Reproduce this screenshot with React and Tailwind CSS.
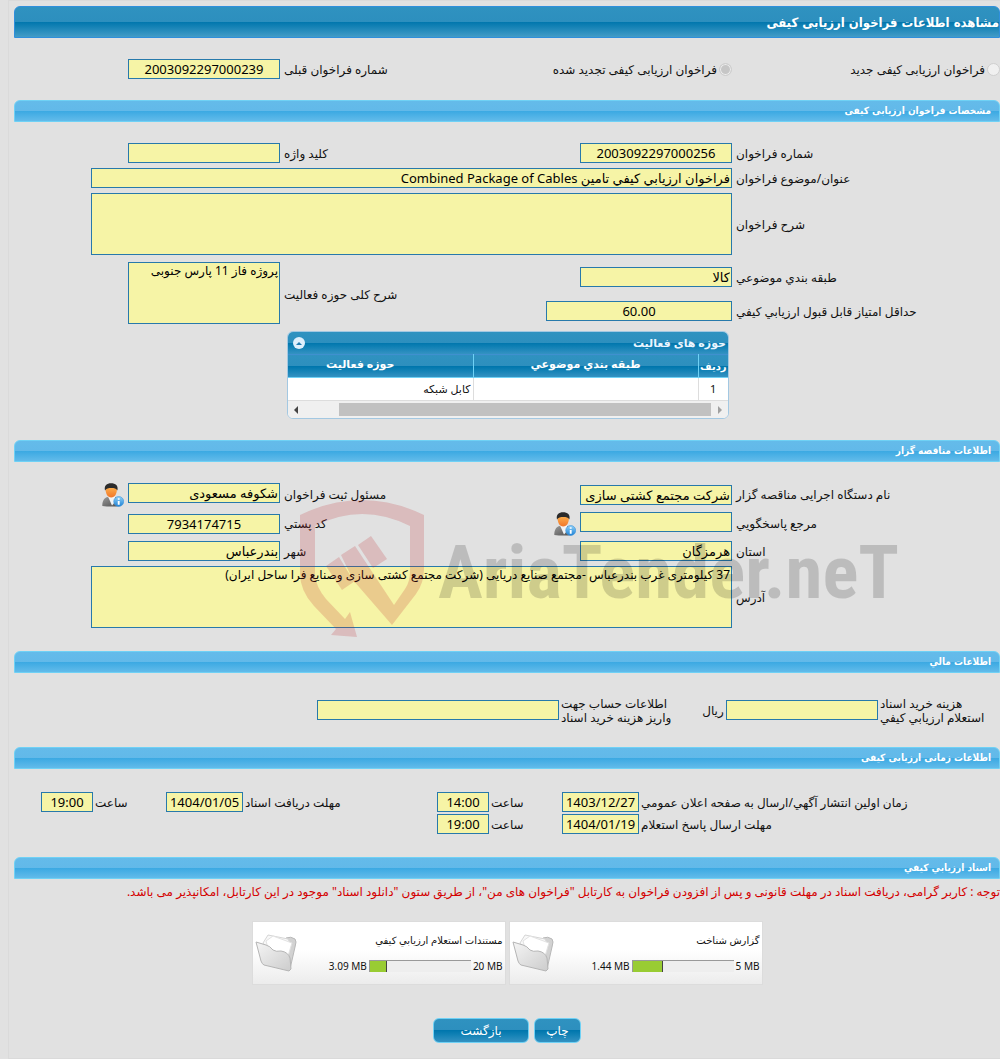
import React from "react";

const fieldBase =
  "block border border-[#2779ab] bg-[#f6f4a6] px-px text-black outline-none";

const grid =
  "grid grid-cols-[264px_minmax(0,1fr)_162px_266px] items-center gap-x-1";

function Field({ id, value = "", center = false, width = "w-[152px]", label, className = "" }) {
  return (
    <input
      id={id}
      readOnly
      aria-label={label}
      defaultValue={value}
      className={`${fieldBase} h-5 max-w-full text-[13px] ${width} ${center ? "text-center" : "text-right"} ${className}`}
    />
  );
}

function Area({ id, value = "", width }) {
  return (
    <textarea
      id={id}
      readOnly
      defaultValue={value}
      className={`${fieldBase} h-[62px] max-w-full resize-none overflow-hidden text-[12px] leading-4 ${width}`}
    />
  );
}

function Label({ htmlFor, children, className = "" }) {
  return (
    <label htmlFor={htmlFor} className={`block pt-0.5 whitespace-nowrap text-left leading-4 ${className}`}>
      {children}
    </label>
  );
}

function SectionBar({ children }) {
  return (
    <h2 className="h-[22px] rounded-t-md border border-[#6fd1f5] bg-[linear-gradient(to_bottom,#64bbea_0%,#62b9e9_48%,#39a8e2_48%,#62bbea_100%)] px-2 font-['DejaVu_Sans_Condensed','DejaVu_Sans',sans-serif] text-[10px] leading-5 font-bold text-white">
      {children}
    </h2>
  );
}

function UserInfoIcon() {
  return (
    <svg width="22" height="24" viewBox="0 0 22 24" aria-hidden="true">
      <defs>
        <linearGradient id="suit" x1="0" y1="0" x2="1" y2="1">
          <stop offset="0" stopColor="#9a9a9a" />
          <stop offset="1" stopColor="#4b4b4b" />
        </linearGradient>
        <linearGradient id="skin" x1="0" y1="0" x2="0" y2="1">
          <stop offset="0" stopColor="#ffb54f" />
          <stop offset="1" stopColor="#f0762a" />
        </linearGradient>
        <linearGradient id="info" x1="0" y1="0" x2="0" y2="1">
          <stop offset="0" stopColor="#8fd0f8" />
          <stop offset="1" stopColor="#1f83d6" />
        </linearGradient>
      </defs>
      <path d="M0.3 23c0-4.500 1.500-8 5-9l4 1 4-1c3.500 1 5 4.500 5 9q-9 1-18 0z" fill="url(#suit)" />
      <path d="M6 13.500L10 22.500l3-3.500 0-5.500z" fill="#f4f4f4" />
      <path d="M3.500 5.500c0 5 2 9 5.700 9s5.800-4 5.800-9c-2-3-9.500-3-11.500 0z" fill="url(#skin)" />
      <path d="M3 7.500C1.800 2.500 5 .2 9 .2c4.500 0 7.500 2.300 6.400 7.300C14.500 5.500 12 5 9.500 5c-3 0-5.300.3-6.500 2.500z" fill="#2b2b2b" />
      <circle cx="16.700" cy="18.500" r="5" fill="url(#info)" stroke="#3f94da" strokeWidth=".6" />
      <path d="M16.700 15.200v1.600M16.700 18v3.800" stroke="#fff" strokeWidth="1.900" />
    </svg>
  );
}

function Watermark() {
  return (
    <div
      dir="ltr"
      aria-hidden="true"
      className="pointer-events-none absolute top-[61px] left-[286px] flex w-[612px] items-center"
    >
      <svg className="shrink-0 overflow-visible" width="126" height="137" viewBox="0 0 126 137">
        <g fill="#c0262c" fillOpacity=".2">
          <path d="M0 14Q62-16 124 14V68Q124 82 116 93L92 124L53 79L41 54L55 45L94 104L105 88Q110 81 110 70V25Q62 1 15 25V74Q16 86 26 98L45 118L50 111L57 136L31 134L36 128L14 105Q0 90 0 72Z" />
          <path d="M26 65L39 56L53 79L55 80L42 89Z" />
          <path d="M58 44L71 35L87 58L73 67Z" />
        </g>
      </svg>
      <span className="mt-1 ml-3 whitespace-nowrap font-['Liberation_Sans_Narrow','Roboto_Condensed','Open_Sans_Condensed','Liberation_Sans',sans-serif] text-[75px] leading-[96px] font-bold text-black/16">
        AriaTender.neT
      </span>
    </div>
  );
}

function Folder() {
  return (
    <svg width="42" height="40" viewBox="0 0 42 40" aria-hidden="true">
      <defs>
        <linearGradient id="folder" x1="0" y1="0" x2="1" y2="1">
          <stop offset="0" stopColor="#f5f5f5" />
          <stop offset="1" stopColor="#cccccc" />
        </linearGradient>
      </defs>
      <path d="M10 12L28 9L31 4Q36 2 40 5Q42 7 40 13L35 35L29 30Z" fill="#d2d2d2" stroke="#b8b8b8" />
      <path d="M8 9L13 1L33 5L36 11L31 31L14 20Z" fill="#f8f8f8" stroke="#d6d6d6" />
      <path d="M11 7L18 2L37 9L33 22L14 18Z" fill="#fff" stroke="#e2e2e2" />
      <path d="M1 8L11 11Q15 12 18 16Q21 18 26 17Q33 18 35 24L36 35L34 37L9 31Q7 30 6 27Z" fill="url(#folder)" stroke="#b5b5b5" />
    </svg>
  );
}

function FileCard({ title, used, total, percent }) {
  return (
    <div className="flex h-16 w-[254px] justify-between border border-[#dcdcdc] bg-linear-to-b from-white from-45% to-[#ececec] px-0.5">
      <div className="flex flex-col pt-2.5">
        <div className="text-[10px] leading-4">{title}</div>
        <div className="mt-2.5 flex h-4 items-center gap-0.5 text-[10px]">
          <bdi>{total}</bdi>
          <div dir="ltr" className="h-3 w-[102px] border-t border-l border-[#999] bg-[#eee]">
            <div className="h-full border-r border-[#444] bg-[#9c3]" style={{ width: percent + "%" }} />
          </div>
          <bdi>{used}</bdi>
        </div>
      </div>
      <div className="pt-3">
        <Folder />
      </div>
    </div>
  );
}

const darkBar =
  "bg-[linear-gradient(to_bottom,#2f92c0_0%,#2d8fbe_50%,#0076ad_50%,#0f80b4_66%,#3492c2_100%)]";
const radio =
  "size-[13px] shrink-0 appearance-none rounded-full border border-[#cfcfcf] bg-[#f0f0f0] checked:bg-[#c6c6c6] checked:shadow-[inset_0_0_0_1px_#ececec]";
const button =
  "h-[25px] rounded-md border border-[#6fd1f5] text-[12px] text-white";

export default function App() {
  return (
    <div
      dir="rtl"
      lang="fa"
      className="min-h-[1059px] overflow-x-hidden bg-[#e1e1e1] pl-2 font-['Noto_Sans','DejaVu_Sans',sans-serif] text-[12px] text-[#111]"
    >
      <main className="border-y border-l border-[#dadada] pt-[5px] pb-[15px] pl-[5px]">
        <h1 className="h-8 rounded-t-md border border-[#2f8fdc] bg-[linear-gradient(to_bottom,#2f92c0_0%,#2d8fbe_50%,#0076ad_50%,#439cc7_100%)] font-['DejaVu_Sans_Condensed','DejaVu_Sans',sans-serif] text-[13px] leading-8 font-bold text-white">
          مشاهده اطلاعات فراخوان ارزیابی کیفی
        </h1>

        <div className={`${grid} mt-[21px] mb-[21px]`}>
          <div className="flex items-center gap-0.5">
            <input id="new" type="radio" name="kind" disabled className={radio} />
            <Label htmlFor="new">فراخوان ارزیابی کیفی جدید</Label>
          </div>
          <div className="flex items-center gap-0.5">
            <input id="renewed" type="radio" name="kind" disabled defaultChecked className={radio} />
            <Label htmlFor="renewed">فراخوان ارزیابی کیفی تجدید شده</Label>
          </div>
          <Label htmlFor="prev">شماره فراخوان قبلی</Label>
          <Field id="prev" value="2003092297000239" center />
        </div>

        <SectionBar>مشخصات فراخوان ارزیابی کیفی</SectionBar>
        <div className={`${grid} mt-[21px] gap-y-[5px]`}>
          <Label htmlFor="num">شماره فراخوان</Label>
          <Field id="num" value="2003092297000256" center />
          <Label htmlFor="keyword">کلید واژه</Label>
          <Field id="keyword" />
          <Label htmlFor="subject">عنوان/موضوع فراخوان</Label>
          <div className="col-span-3">
            <Field id="subject" width="w-[641px]" value="فراخوان ارزيابي كيفي تامين Combined Package of Cables" />
          </div>
          <Label htmlFor="desc">شرح فراخوان</Label>
          <div className="col-span-3">
            <Area id="desc" width="w-[641px]" />
          </div>
        </div>
        <div className={`${grid} mt-[5px] grid-rows-[34px_34px]`}>
          <Label htmlFor="category">طبقه بندي موضوعي</Label>
          <Field id="category" value="کالا" />
          <Label htmlFor="scope" className="row-span-2">شرح کلی حوزه فعالیت</Label>
          <div className="row-span-2 self-start pt-0.5">
            <Area id="scope" width="w-[152px]" value="پروژه فاز 11 پارس جنوبی" />
          </div>
          <Label htmlFor="score">حداقل امتیاز قابل قبول ارزيابي كيفي</Label>
          <Field id="score" width="w-[186px]" value="60.00" center />
        </div>

        <section className="mt-[3px] mr-[271px] w-[442px] overflow-hidden rounded-md border border-[#a3c8e2] bg-white">
          <div className={`${darkBar} flex h-[22px] items-center justify-between pr-0.5 pl-[5px]`}>
            <h3 className="text-[11px] font-bold text-[#eaf5ff]">حوزه های فعالیت</h3>
            <button type="button" aria-label="بستن" className="flex size-3 items-center justify-center rounded-full bg-[#dfeffc]">
              <svg width="6" height="3" viewBox="0 0 6 3"><path d="M0 3L3 0L6 3Z" fill="#217bb0" /></svg>
            </button>
          </div>
          <table className="w-[480px] table-fixed border-collapse text-[11px]">
            <thead>
              <tr className={`${darkBar} h-[23px] border-t border-b border-t-[#3f90cf] border-b-[#6fd1f5] leading-4 text-white`}>
                <th className="w-[30px] border-l border-[#6fd1f5] p-0 text-[10px]">ردیف</th>
                <th className="w-[225px] border-l border-[#6fd1f5] p-0 pb-1">طبقه بندي موضوعي</th>
                <th className="w-[225px] p-0 pb-1">حوزه فعالیت</th>
              </tr>
            </thead>
            <tbody>
              <tr className="h-[23px] border-b border-[#ddd] leading-4">
                <td className="border-l border-[#ddd] p-0 text-center">1</td>
                <td className="border-l border-[#ddd] p-0" />
                <td className="px-0.5 py-0">کابل شبکه</td>
              </tr>
            </tbody>
          </table>
          <div className="flex h-[17px] items-center justify-between bg-[#f0f0f0] px-1.5">
            <svg width="4" height="8" viewBox="0 0 4 8"><path d="M0 0L4 4L0 8Z" fill="#a0a0a0" /></svg>
            <div className="mr-[7px] h-[13px] w-[372px] bg-[#c1c1c1]" />
            <div className="grow" />
            <svg width="4" height="8" viewBox="0 0 4 8"><path d="M4 0L0 4L4 8Z" fill="#444" /></svg>
          </div>
        </section>

        <div className="relative mt-[21px]">
          <SectionBar>اطلاعات مناقصه گزار</SectionBar>
          <div className={`${grid} mt-[21px] grid-rows-[22px_22px_20px] gap-y-[7px]`}>
            <Label htmlFor="org">نام دستگاه اجرایی مناقصه گزار</Label>
            <Field id="org" value="شرکت مجتمع کشتی سازی" className="self-end" />
            <Label htmlFor="owner">مسئول ثبت فراخوان</Label>
            <div className="flex h-full items-start gap-1">
              <Field id="owner" value="شکوفه مسعودی" />
              <UserInfoIcon />
            </div>
            <Label htmlFor="contact">مرجع پاسخگويي</Label>
            <div className="flex h-full items-start gap-1">
              <Field id="contact" />
              <UserInfoIcon />
            </div>
            <Label htmlFor="postal">کد پستي</Label>
            <Field id="postal" value="7934174715" center className="self-end" />
            <Label htmlFor="province">استان</Label>
            <Field id="province" value="هرمزگان" />
            <Label htmlFor="city">شهر</Label>
            <Field id="city" value="بندرعباس" />
          </div>
          <div className={`${grid} mt-[5px] mb-[23px]`}>
            <Label htmlFor="address">آدرس</Label>
            <div className="col-span-3">
              <Area id="address" width="w-[641px]" value="37 کیلومتری غرب بندرعباس -مجتمع صنایع دریایی (شرکت مجتمع کشتی سازی وصنایع فرا ساحل ایران)" />
            </div>
          </div>
          <Watermark />
        </div>

        <SectionBar>اطلاعات مالي</SectionBar>
        <div className="mt-[22px] mb-[22px] flex items-start gap-0.5">
          <Label htmlFor="cost" className="w-[120px] leading-[14px]">
            هزینه خرید اسناد<br />استعلام ارزيابي كيفي
          </Label>
          <Field id="cost" className="mt-[5px]" />
          <span className="mt-2 w-[22px] text-center leading-4 whitespace-nowrap">ریال</span>
          <Label htmlFor="account" className="w-[139px] leading-[14px]">
            اطلاعات حساب جهت<br />واریز هزینه خرید اسناد
          </Label>
          <Field id="account" width="w-[242px]" className="mt-[5px]" />
        </div>

        <SectionBar>اطلاعات زمانی ارزیابی کیفی</SectionBar>
        <div className="mt-[23px] mb-[23px] grid grid-cols-[359px_77px_69px_52px_minmax(0,1fr)_77px_69px_52px] items-center gap-0.5 pl-[27px]">
          <Label htmlFor="pub">زمان اولین انتشار آگهي/ارسال به صفحه اعلان عمومي</Label>
          <Field id="pub" width="w-full" value="1403/12/27" center />
          <Label htmlFor="pubt">ساعت</Label>
          <Field id="pubt" width="w-full" value="14:00" center />
          <Label htmlFor="docs">مهلت دریافت اسناد</Label>
          <Field id="docs" width="w-full" value="1404/01/05" center />
          <Label htmlFor="docst">ساعت</Label>
          <Field id="docst" width="w-full" value="19:00" center />
          <Label htmlFor="reply">مهلت ارسال پاسخ استعلام</Label>
          <Field id="reply" width="w-full" value="1404/01/19" center />
          <Label htmlFor="replyt">ساعت</Label>
          <Field id="replyt" width="w-full" value="19:00" center />
        </div>

        <SectionBar>اسناد ارزيابي كيفي</SectionBar>
        <p className="mt-[5px] whitespace-nowrap leading-4 text-[#d40000]">
          توجه : کاربر گرامی، دریافت اسناد در مهلت قانونی و پس از افزودن فراخوان به کارتابل "فراخوان های من"، از طریق ستون "دانلود اسناد" موجود در این کارتابل، امکانپذیر می باشد.
        </p>

        <div className="mt-[21px] flex justify-center gap-[3px]">
          <FileCard title="گزارش شناخت" used="1.44 MB" total="5 MB" percent={30} />
          <FileCard title="مستندات استعلام ارزيابي كيفي" used="3.09 MB" total="20 MB" percent={17} />
        </div>
        <div className="mt-[33px] flex justify-center gap-[5px]">
          <button type="button" className={`${button} ${darkBar} w-[47px]`}>چاپ</button>
          <button type="button" className={`${button} ${darkBar} w-24`}>بازگشت</button>
        </div>
      </main>
    </div>
  );
}
